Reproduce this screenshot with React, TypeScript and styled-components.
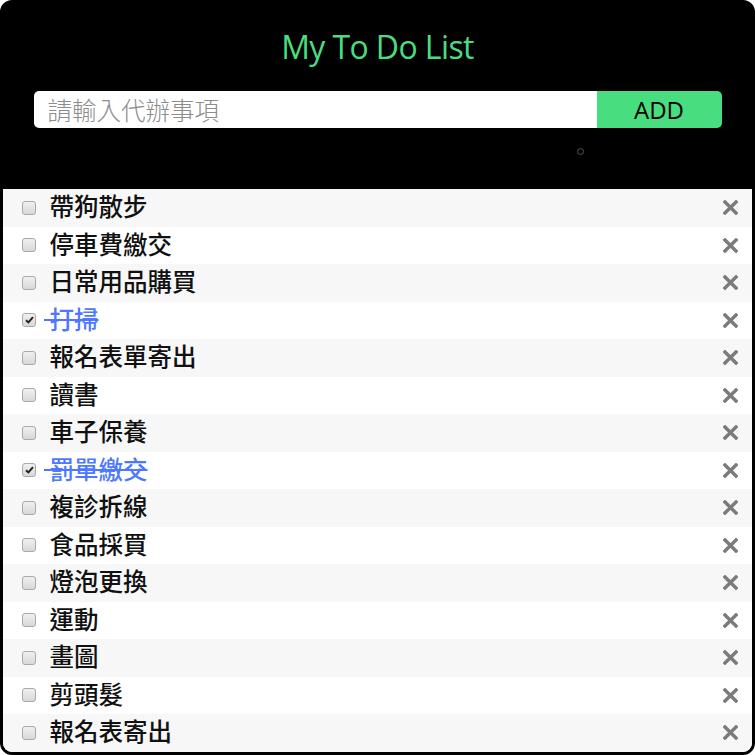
import React, { useState } from 'react';
import styled, { createGlobalStyle } from 'styled-components';

const GlobalStyle = createGlobalStyle`
  html, body {
    margin: 0;
    padding: 0;
    background: #fff;
  }
  * {
    box-sizing: border-box;
  }
`;

const Frame = styled.div`
  width: 755px;
  height: 755px;
  border: 3px solid #000;
  border-radius: 12px;
  overflow: hidden;
  background: #000;
  display: flex;
  flex-direction: column;
`;

const Header = styled.header`
  height: 186px;
  background: #000;
  display: flex;
  flex-direction: column;
  align-items: center;
  padding-top: 24px;
`;

const Title = styled.h1`
  margin: 0;
  height: 40px;
  line-height: 40px;
  font-family: 'Open Sans', 'Noto Sans', sans-serif;
  font-weight: 500;
  font-size: 32px;
  letter-spacing: -0.6px;
  color: #48de80;
`;

const InputRow = styled.form`
  margin-top: 24px;
  width: 688px;
  height: 37px;
  display: flex;
`;

const TextInput = styled.input`
  flex: 1;
  height: 100%;
  border: none;
  outline: none;
  border-radius: 5px 0 0 5px;
  padding: 0 14px;
  font-size: 24.5px;
  font-weight: 300;
  font-family: 'Noto Sans CJK TC', 'Noto Sans', sans-serif;
  color: #333;
  &::placeholder {
    color: #8c8c8c;
  }
`;

const AddButton = styled.button`
  width: 125px;
  height: 100%;
  border: none;
  border-radius: 0 5px 5px 0;
  background: #48de80;
  color: #000;
  font-family: 'Open Sans', 'Noto Sans', sans-serif;
  font-size: 24px;
  padding: 0;
  cursor: pointer;
`;

const DotRow = styled.div`
  width: 100%;
  display: flex;
  padding-left: 574px;
  margin-top: 20px;
`;

const Dot = styled.span`
  width: 7px;
  height: 7px;
  border: 1px solid #555;
  border-radius: 50%;
`;

const List = styled.ul`
  list-style: none;
  margin: 0;
  padding: 0;
  flex: 1;
  background: #fff;
`;

const Row = styled.li<{ $odd: boolean }>`
  height: 37.5px;
  display: flex;
  align-items: center;
  padding: 0 12px 0 19px;
  background: ${({ $odd }) => ($odd ? '#f7f7f7' : '#fff')};
`;

const Box = styled.span`
  width: 14px;
  height: 14px;
  border: 1px solid #a9a9a9;
  border-radius: 3px;
  background: linear-gradient(#f0f0f0, #d8d8d8);
  display: flex;
  align-items: center;
  justify-content: center;
  flex-shrink: 0;
  cursor: pointer;
`;

const Label = styled.span<{ $done: boolean }>`
  margin-left: 8px;
  flex: 1;
  white-space: pre;
  font-family: 'Noto Sans CJK TC', 'Noto Sans', sans-serif;
  font-size: 24.5px;
  font-weight: 500;
  color: ${({ $done }) => ($done ? '#4d78ff' : '#111')};
  text-decoration: ${({ $done }) => ($done ? 'line-through' : 'none')};
  text-decoration-thickness: 2px;
  line-height: 1;
  padding-bottom: 3px;
`;

const Remove = styled.button`
  width: 20px;
  height: 20px;
  padding: 0;
  border: none;
  background: none;
  display: flex;
  align-items: center;
  justify-content: center;
  cursor: pointer;
`;

const initial = [
  { text: '帶狗散步', done: false },
  { text: '停車費繳交', done: false },
  { text: '日常用品購買', done: false },
  { text: '打掃', done: true },
  { text: '報名表單寄出', done: false },
  { text: '讀書', done: false },
  { text: '車子保養', done: false },
  { text: '罰單繳交', done: true },
  { text: '複診拆線', done: false },
  { text: '食品採買', done: false },
  { text: '燈泡更換', done: false },
  { text: '運動', done: false },
  { text: '畫圖', done: false },
  { text: '剪頭髮', done: false },
  { text: '報名表寄出', done: false },
];

export default function App() {
  const [items, setItems] = useState(initial);
  const [draft, setDraft] = useState('');

  const toggle = (i: number) =>
    setItems(items.map((it, idx) => (idx === i ? { ...it, done: !it.done } : it)));

  return (
    <>
      <GlobalStyle />
      <Frame>
        <Header>
          <Title>My To Do List</Title>
          <InputRow onSubmit={(e) => e.preventDefault()}>
            <TextInput
              placeholder="請輸入代辦事項"
              value={draft}
              onChange={(e) => setDraft(e.target.value)}
            />
            <AddButton type="submit">ADD</AddButton>
          </InputRow>
          <DotRow>
            <Dot />
          </DotRow>
        </Header>
        <List>
          {items.map((it, i) => (
            <Row key={i} $odd={i % 2 === 0}>
              <Box onClick={() => toggle(i)}>
                {it.done && (
                  <svg width="9" height="8" viewBox="0 0 9 8">
                    <path d="M1 4.2 L3.4 6.4 L8 1.2" stroke="#222" strokeWidth="2" fill="none" />
                  </svg>
                )}
              </Box>
              <Label $done={it.done}>{' ' + it.text}</Label>
              <Remove>
                <svg width="15" height="15" viewBox="0 0 15 15">
                  <path d="M2 2 L13 13 M13 2 L2 13" stroke="#7b7b7b" strokeWidth="3.4" strokeLinecap="square" />
                </svg>
              </Remove>
            </Row>
          ))}
        </List>
      </Frame>
    </>
  );
}
